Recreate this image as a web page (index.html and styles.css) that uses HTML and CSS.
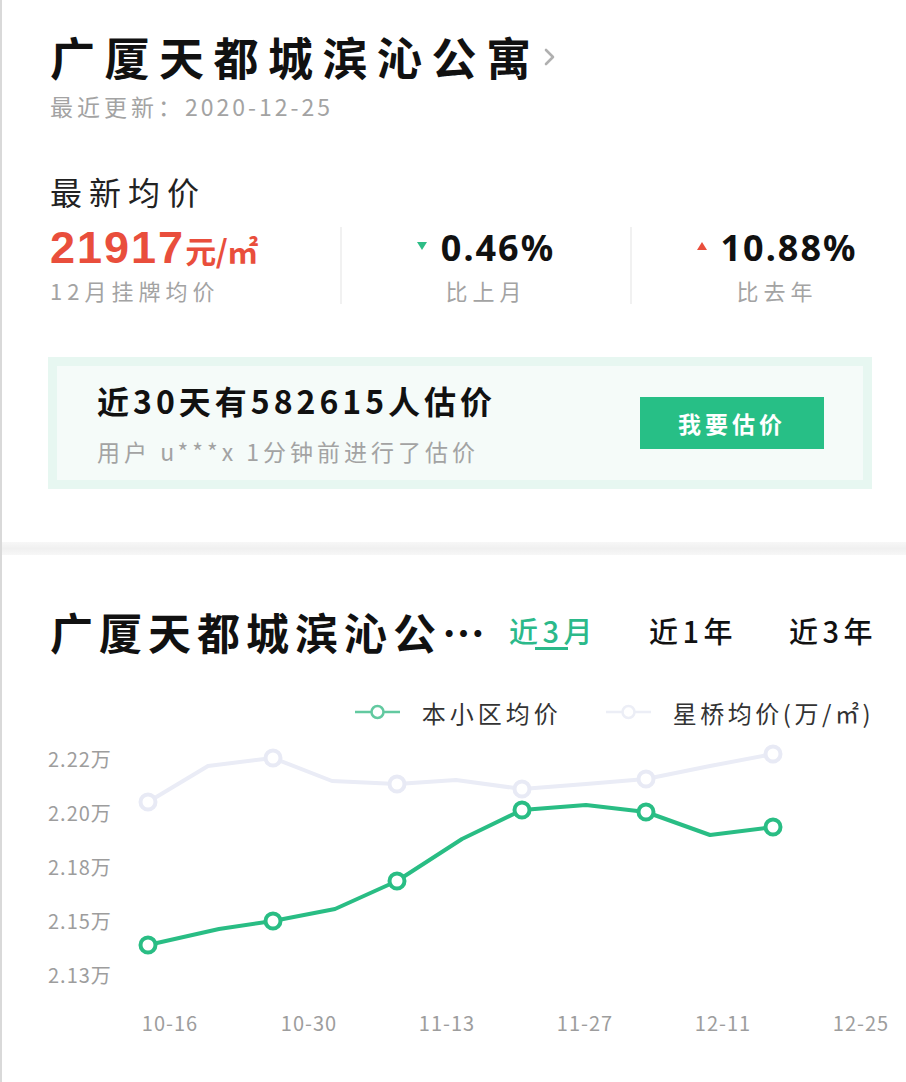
FILE: index.html
```html
<!DOCTYPE html>
<html lang="zh-CN">
<head>
<meta charset="utf-8">
<title>广厦天都城滨沁公寓</title>
<link rel="stylesheet" href="styles.css">
</head>
<body>
<div class="page">
  <section class="top">
    <h1 class="title">广厦天都城滨沁公寓<svg class="chev" viewBox="0 0 14 20"><polyline points="3,3 10,10 3,17" fill="none" stroke="#b0b0b0" stroke-width="2.6" stroke-linecap="round" stroke-linejoin="round"/></svg></h1>
    <p class="updated">最近更新：<span class="date">2020-12-25</span></p>
    <h2 class="sub-h">最新均价</h2>
    <div class="stats">
      <div class="stat first">
        <div class="val"><span class="num">21917</span><span class="unit">元/㎡</span></div>
        <div class="lbl">12月挂牌均价</div>
      </div>
      <div class="stat">
        <div class="val"><span class="tri down"></span><span class="pct">0.46%</span></div>
        <div class="lbl">比上月</div>
      </div>
      <div class="stat last">
        <div class="val"><span class="tri up"></span><span class="pct">10.88%</span></div>
        <div class="lbl">比去年</div>
      </div>
    </div>
    <div class="card">
      <div class="card-in">
        <div class="card-text">
          <div class="card-h">近30天有582615人估价</div>
          <div class="card-s">用户 u***x 1分钟前进行了估价</div>
        </div>
        <div class="btn">我要估价</div>
      </div>
    </div>
  </section>
  <div class="band"></div>
  <section class="trend">
    <div class="trend-top">
      <div class="trend-head">
        <h2 class="trend-title">广厦天都城滨沁公…</h2>
        <nav class="tabs">
          <div class="tab on"><span>近3月</span><i class="bar"></i></div>
          <div class="tab"><span>近1年</span></div>
          <div class="tab"><span>近3年</span></div>
        </nav>
      </div>
      <div class="legend">
        <div class="leg"><svg viewBox="0 0 45 16"><line x1="0" y1="8" x2="45" y2="8" stroke="#62c9a0" stroke-width="2.5"/><circle cx="22.5" cy="8" r="6" fill="#fff" stroke="#62c9a0" stroke-width="2.5"/></svg><span>本小区均价</span></div>
        <div class="leg"><svg viewBox="0 0 45 16"><line x1="0" y1="8" x2="45" y2="8" stroke="#eceef6" stroke-width="2.5"/><circle cx="22.5" cy="8" r="6" fill="#fff" stroke="#eceef6" stroke-width="2.5"/></svg><span>星桥均价(万/㎡)</span></div>
      </div>
    </div>
    <svg class="chart" viewBox="2 735 904 347">
      <g class="ylab">
        <text x="48" y="759">2.22万</text>
        <text x="48" y="813">2.20万</text>
        <text x="48" y="867">2.18万</text>
        <text x="48" y="921">2.15万</text>
        <text x="48" y="975">2.13万</text>
      </g>
      <g class="xlab">
        <text x="170" y="1023">10-16</text>
        <text x="309" y="1023">10-30</text>
        <text x="447" y="1023">11-13</text>
        <text x="585" y="1023">11-27</text>
        <text x="723" y="1023">12-11</text>
        <text x="861" y="1023">12-25</text>
      </g>
      <polyline class="l-grey" points="148,803 208,767 273,759 332,782 397,785 456,781 522,790 586,785 646,780 710,767 773,755"/>
      <g class="m-grey">
        <circle cx="148" cy="803" r="7.5"/>
        <circle cx="273" cy="759" r="7.5"/>
        <circle cx="397" cy="785" r="7.5"/>
        <circle cx="522" cy="790" r="7.5"/>
        <circle cx="646" cy="780" r="7.5"/>
        <circle cx="773" cy="755" r="7.5"/>
      </g>
      <polyline class="l-green" points="148,946 219,930 273,922 335,910 397,882 462,840 522,811 586,806 646,813 710,836 773,828"/>
      <g class="m-green">
        <circle cx="148" cy="946" r="7.5"/>
        <circle cx="273" cy="922" r="7.5"/>
        <circle cx="397" cy="882" r="7.5"/>
        <circle cx="522" cy="811" r="7.5"/>
        <circle cx="646" cy="813" r="7.5"/>
        <circle cx="773" cy="828" r="7.5"/>
      </g>
    </svg>
  </section>
</div>
</body>
</html>
```

FILE: styles.css
```css
* { box-sizing: border-box; margin: 0; padding: 0; }
body {
  margin: 0;
  background: #fff;
  font-family: "Noto Sans CJK SC", "Noto Sans", sans-serif;
  color: #111;
}
.page {
  width: 906px;
  height: 1082px;
  overflow: hidden;
  border-left: 2px solid #d9d9d9;
}
.top { padding: 29px 0 53px 48px; }
.title {
  display: flex;
  align-items: center;
  font-size: 45px;
  line-height: 56px;
  font-weight: 700;
  letter-spacing: 9.5px;
  color: #111;
}
.chev { width: 14px; height: 20px; margin-left: 2px; }
.updated {
  margin-top: 6px;
  font-size: 23px;
  line-height: 30px;
  color: #a3a3a3;
  letter-spacing: 4px;
}
.date { letter-spacing: 3px; }
.sub-h {
  margin-top: 50px;
  font-size: 32px;
  line-height: 40px;
  font-weight: 400;
  letter-spacing: 7px;
  color: #222;
}
.stats {
  margin-top: 16px;
  display: grid;
  grid-template-columns: 290px 290px 1fr;
  height: 76px;
}
.stat { display: flex; flex-direction: column; align-items: center; }
.stat.first { align-items: flex-start; }
.stat + .stat { border-left: 2px solid #f1f1f1; }
.stat.last { padding-left: 16px; }
.val { display: flex; align-items: baseline; height: 42px; line-height: 42px; }
.num {
  font-family: "Liberation Sans", "Noto Sans", sans-serif;
  font-weight: 700;
  font-size: 45px;
  letter-spacing: 2px;
  color: #e94e3c;
}
.unit { font-size: 31px; font-weight: 700; color: #e94e3c; letter-spacing: -0.5px; }
.pct {
  font-family: "Noto Sans", sans-serif;
  font-weight: 700;
  font-size: 36px;
  letter-spacing: 2px;
  color: #111;
}
.tri {
  width: 0;
  height: 0;
  border-left: 5px solid transparent;
  border-right: 5px solid transparent;
  margin-right: 14px;
  align-self: center;
  margin-bottom: 4px;
}
.tri.down { border-top: 8px solid #2dbd86; }
.tri.up { border-bottom: 8px solid #e94e3c; }
.lbl {
  margin-top: 7px;
  font-size: 22px;
  line-height: 28px;
  color: #a3a3a3;
  letter-spacing: 5px;
}
.card {
  margin: 54px 34px 0 -2px;
  background: #e7f7f1;
  padding: 9px;
}
.card-in {
  background: #f5fbf9;
  height: 114px;
  display: flex;
  align-items: center;
  justify-content: space-between;
  padding: 0 39px 0 40px;
}
.card-h {
  font-size: 32px;
  line-height: 40px;
  font-weight: 700;
  letter-spacing: 4px;
  color: #111;
}
.card-s {
  margin-top: 16px;
  font-size: 23px;
  line-height: 30px;
  color: #a3a3a3;
  letter-spacing: 4px;
}
.btn {
  width: 184px;
  height: 52px;
  background: #27bf86;
  color: #fff;
  font-size: 23px;
  font-weight: 700;
  letter-spacing: 4px;
  display: flex;
  align-items: center;
  justify-content: center;
}
.band { height: 13px; background: linear-gradient(#f7f7f7, #f0f0f0 50%, #f7f7f7); }
.trend-top { padding: 48px 0 0 48px; }
.trend-head { display: flex; align-items: center; height: 56px; }
.trend-title {
  flex-shrink: 0;
  font-size: 43px;
  line-height: 56px;
  font-weight: 700;
  letter-spacing: 6px;
  white-space: nowrap;
  color: #111;
}
.tabs { display: flex; flex-shrink: 0; margin-left: 18px; gap: 52px; align-items: flex-start; }
.tab {
  display: flex;
  flex-direction: column;
  align-items: center;
  white-space: nowrap;
  font-size: 29px;
  line-height: 34px;
  letter-spacing: 4.5px;
  font-weight: 500;
  color: #111;
}
.tab.on { color: #2bb98a; }
.bar { display: block; width: 33px; height: 3px; background: #2bb98a; margin-right: 4px; }
.legend {
  margin-top: 38px;
  padding-right: 32px;
  height: 30px;
  display: flex;
  justify-content: flex-end;
  align-items: center;
  font-size: 24px;
  color: #333;
  letter-spacing: 4px;
}
.leg { display: flex; align-items: center; }
.leg + .leg { margin-left: 44px; }
.leg svg { width: 45px; height: 16px; margin-right: 22px; }
.leg + .leg span { letter-spacing: 3.5px; }
.chart { display: block; width: 904px; height: 347px; margin-top: 7px; }
.chart text {
  font-family: "Noto Sans CJK SC", sans-serif;
  font-size: 20px;
  fill: #9d9d9d;
  dominant-baseline: central;
  letter-spacing: 1px;
}
.xlab text { text-anchor: middle; }
.l-green { fill: none; stroke: #29bd84; stroke-width: 4; stroke-linejoin: round; stroke-linecap: round; }
.l-grey { fill: none; stroke: #eaecf6; stroke-width: 4; stroke-linejoin: round; stroke-linecap: round; }
.m-green circle { fill: #fff; stroke: #29bd84; stroke-width: 4; }
.m-grey circle { fill: #fff; stroke: #e8eaf5; stroke-width: 4; }
```
